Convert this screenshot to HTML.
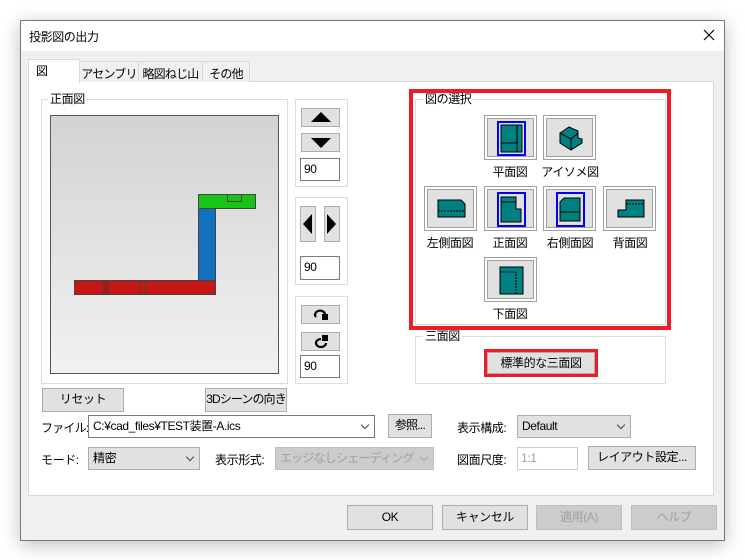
<!DOCTYPE html>
<html><head><meta charset="utf-8"><style>
*{box-sizing:border-box;margin:0;padding:0}
body{width:745px;height:560px;background:#fff;position:relative;overflow:hidden;font-family:"Liberation Sans","Noto Sans CJK JP",sans-serif;font-size:12px;color:#000;white-space:nowrap;letter-spacing:-0.4px}
.a{position:absolute}
.win{left:20px;top:20px;width:705px;height:521px;background:#f0f0f0;border:1px solid #777;box-shadow:0 4px 18px rgba(0,0,0,.25)}
.tb{left:21px;top:21px;width:703px;height:30px;background:#fff}
.panel{left:28px;top:81px;width:686px;height:415px;background:#fff;border:1px solid #d9d9d9}
.tab{top:61px;height:21px;background:#f0f0f0;border:1px solid #d9d9d9;border-bottom:none;padding:3px 0 0;text-align:center;overflow:hidden;letter-spacing:-0.8px}
.grp{border:1px solid #dcdcdc}
.gl{background:#fff;padding:0 2px;line-height:12px}
.btn{background:#e1e1e1;border:1px solid #adadad;text-align:center;line-height:21px;overflow:hidden}
.inp{background:#fff;border:1px solid #7a7a7a;padding-left:3px;line-height:20px}
.cb{background:#fff;border:1px solid #7a7a7a;padding-left:4px;line-height:20px;overflow:hidden}
.cbg{background:#e1e1e1;border:1px solid #adadad;padding-left:4px;line-height:20px;overflow:hidden}
.chev{position:absolute;right:6px;top:6px;width:6px;height:6px;border-right:1px solid #444;border-bottom:1px solid #444;transform:rotate(45deg)}
.ib{width:53px;height:45px;background:#fff;border:1px solid #a0a0a0;padding:2px}
.ib>div{width:100%;height:100%;background:#e1e1e1;border:1px solid #a0a0a0;position:relative}
.lbl{width:60px;text-align:center}
.dis{color:#a0a0a0}
</style></head><body>
<div class="a win"></div>
<div class="a tb"></div>
<div class="a" style="left:29px;top:28px;font-size:12px">投影図の出力</div>
<svg class="a" style="left:703px;top:29px" width="12" height="12"><path d="M1 1L11 11M11 1L1 11" stroke="#000" stroke-width="1.2"/></svg>
<div class="a panel"></div>
<div class="a tab" style="left:79px;width:60px">アセンブリ</div>
<div class="a tab" style="left:138px;width:65px">略図ねじ山</div>
<div class="a tab" style="left:202px;width:48px">その他</div>
<div class="a tab" style="left:28px;top:59px;width:52px;height:24px;background:#fff;padding:2px 7px;text-align:left">図</div>

<div class="a grp" style="left:41px;top:99px;width:247px;height:285px"></div>
<div class="a gl" style="left:48px;top:93px">正面図</div>
<div class="a" style="left:50px;top:115px;width:229px;height:259px;border:1px solid #555;background:linear-gradient(#d3d3d3,#f1f1f1)"></div>
<div class="a" style="left:198px;top:194px;width:58px;height:15px;background:#17c417;border:1px solid #444"></div>
<div class="a" style="left:227px;top:194px;width:15px;height:8px;border:1px solid #444"></div>
<div class="a" style="left:198px;top:208px;width:18px;height:73px;background:#1570bd;border:1px solid #444"></div>
<div class="a" style="left:74px;top:280px;width:142px;height:15px;background:#c71616;border:1px solid #444"></div>
<div class="a" style="left:102px;top:280px;width:7px;height:15px;border:1px solid #444;background:#b01414"></div>
<div class="a" style="left:139px;top:280px;width:7px;height:15px;border:1px solid #444;border-top:none;border-bottom:none"></div>

<div class="a grp" style="left:295px;top:99px;width:53px;height:88px"></div>
<div class="a btn" style="left:301px;top:108px;width:39px;height:19px"></div>
<svg class="a" style="left:310px;top:111px" width="22" height="12"><path d="M11 1L21 11H1Z"/></svg>
<div class="a btn" style="left:301px;top:133px;width:39px;height:19px"></div>
<svg class="a" style="left:310px;top:137px" width="22" height="12"><path d="M1 1H21L11 11Z"/></svg>
<div class="a inp" style="left:300px;top:158px;width:40px;height:23px">90</div>

<div class="a grp" style="left:295px;top:197px;width:53px;height:88px"></div>
<div class="a btn" style="left:300px;top:206px;width:16px;height:36px"></div>
<svg class="a" style="left:302px;top:214px" width="12" height="20"><path d="M10 0V20L1 10Z"/></svg>
<div class="a btn" style="left:324px;top:206px;width:16px;height:36px"></div>
<svg class="a" style="left:326px;top:214px" width="12" height="20"><path d="M1 0V20L10 10Z"/></svg>
<div class="a inp" style="left:300px;top:256px;width:40px;height:24px">90</div>

<div class="a grp" style="left:295px;top:296px;width:53px;height:88px"></div>
<div class="a btn" style="left:301px;top:305px;width:39px;height:19px"></div>
<svg class="a" style="left:311px;top:307px" width="20" height="14"><path d="M5 10A5 4 0 1 1 14 7" fill="none" stroke="#000" stroke-width="2.2"/><path d="M11 7H17V13H11Z"/></svg>
<div class="a btn" style="left:301px;top:332px;width:39px;height:19px"></div>
<svg class="a" style="left:311px;top:334px" width="20" height="14"><path d="M10 5A5 4 0 1 0 15 9" fill="none" stroke="#000" stroke-width="2.2"/><path d="M11 1H17V7H11Z"/></svg>
<div class="a inp" style="left:300px;top:355px;width:40px;height:23px">90</div>

<div class="a btn" style="left:42px;top:388px;width:82px;height:24px">リセット</div>
<div class="a btn" style="left:205px;top:388px;width:82px;height:24px;letter-spacing:-0.9px">3Dシーンの向き</div>

<div class="a" style="left:41px;top:419px;letter-spacing:-0.8px">ファイル:</div>
<div class="a cb" style="left:88px;top:415px;width:287px;height:23px">C:¥cad_files¥TEST装置-A.ics<span class="chev"></span></div>
<div class="a btn" style="left:388px;top:414px;width:44px;height:24px;letter-spacing:-0.8px">参照...</div>
<div class="a" style="left:457px;top:419px">表示構成:</div>
<div class="a cbg" style="left:517px;top:415px;width:114px;height:23px">Default<span class="chev"></span></div>

<div class="a" style="left:41px;top:451px">モード:</div>
<div class="a cbg" style="left:88px;top:447px;width:112px;height:23px">精密<span class="chev"></span></div>
<div class="a" style="left:215px;top:451px">表示形式:</div>
<div class="a cbg dis" style="left:275px;top:447px;width:159px;height:23px;background:#ccc;border-color:#bfbfbf;letter-spacing:-0.8px">エッジなしシェーディング<span class="chev" style="border-color:#aaa"></span></div>
<div class="a" style="left:457px;top:451px">図面尺度:</div>
<div class="a inp dis" style="left:517px;top:447px;width:61px;height:23px;border-color:#ccc">1:1</div>
<div class="a btn" style="left:588px;top:446px;width:108px;height:24px">レイアウト設定...</div>

<div class="a grp" style="left:415px;top:99px;width:251px;height:226px"></div>
<div class="a" style="left:409px;top:89px;width:262px;height:241px;border:4px solid #ee1c25"></div>
<div class="a gl" style="left:423px;top:93px">図の選択</div>

<div class="a ib" style="left:484px;top:115px"><div><svg width="47" height="39"><rect x="10" y="3" width="27" height="33" fill="none" stroke="#00f" stroke-width="2"/><rect x="13" y="6" width="21" height="27" fill="#008080" stroke="#000"/><path d="M13 24H29M29 6V33" stroke="#000"/></svg></div></div>
<div class="lbl a" style="left:480px;top:163px">平面図</div>
<div class="a ib" style="left:543px;top:115px"><div><svg width="47" height="39"><path d="M13 14L22 8L31 12L31 19L35 20L35 24L24 31L13 24Z" fill="#008080" stroke="#000"/><path d="M13 14L24 20L31 14M24 20V31" stroke="#000" fill="none"/></svg></div></div>
<div class="lbl a" style="left:540px;top:163px">アイソメ図</div>

<div class="a ib" style="left:424px;top:186px"><div><svg width="47" height="39"><path d="M10 10H33L37 14V27H10Z" fill="#008080" stroke="#000"/><path d="M10 21H37" stroke="#000" stroke-dasharray="2 1"/></svg></div></div>
<div class="lbl a" style="left:420px;top:234px">左側面図</div>
<div class="a ib" style="left:484px;top:186px"><div><svg width="47" height="39"><rect x="10" y="3" width="27" height="33" fill="none" stroke="#00f" stroke-width="2"/><path d="M13 7H28V19H33V32H13Z" fill="#008080" stroke="#000"/><path d="M13 12H28" stroke="#000"/></svg></div></div>
<div class="lbl a" style="left:480px;top:234px">正面図</div>
<div class="a ib" style="left:543px;top:186px"><div><svg width="47" height="39"><rect x="10" y="3" width="27" height="33" fill="none" stroke="#00f" stroke-width="2"/><path d="M17 8H33V31H13V12Z" fill="#008080" stroke="#000"/><path d="M13 22H33" stroke="#000"/></svg></div></div>
<div class="lbl a" style="left:540px;top:234px">右側面図</div>
<div class="a ib" style="left:603px;top:186px"><div><svg width="47" height="39"><path d="M19 10H37V27H11V20H19Z" fill="#008080" stroke="#000"/><path d="M19 14H37" stroke="#000" stroke-dasharray="2 1"/></svg></div></div>
<div class="lbl a" style="left:600px;top:234px">背面図</div>

<div class="a ib" style="left:484px;top:257px"><div><svg width="47" height="39"><rect x="12" y="6" width="23" height="27" fill="#008080" stroke="#000"/><path d="M12 11H28V33" stroke="#000" stroke-dasharray="2 1" fill="none"/></svg></div></div>
<div class="lbl a" style="left:480px;top:305px">下面図</div>

<div class="a grp" style="left:415px;top:336px;width:251px;height:48px"></div>
<div class="a gl" style="left:423px;top:330px">三面図</div>
<div class="a" style="left:484px;top:349px;width:114px;height:28px;border:3px solid #ee1c25"></div>
<div class="a btn" style="left:487px;top:352px;width:108px;height:22px;line-height:20px">標準的な三面図</div>

<div class="a btn" style="left:347px;top:505px;width:86px;height:25px;line-height:23px">OK</div>
<div class="a btn" style="left:442px;top:505px;width:86px;height:25px;line-height:23px">キャンセル</div>
<div class="a btn dis" style="left:536px;top:505px;width:86px;height:25px;line-height:23px;background:#ccc;border-color:#bfbfbf">適用(A)</div>
<div class="a btn dis" style="left:631px;top:505px;width:86px;height:25px;line-height:23px;background:#ccc;border-color:#bfbfbf">ヘルプ</div>
</body></html>
